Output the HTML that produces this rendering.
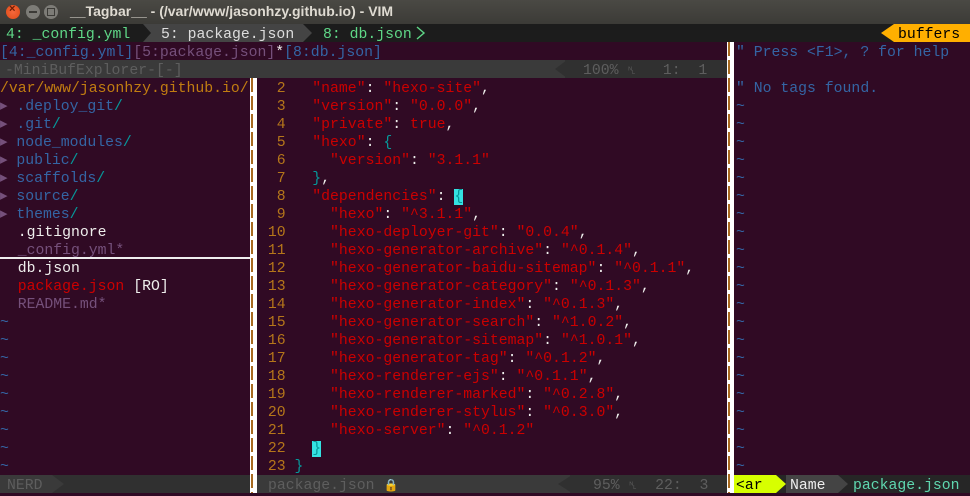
<!DOCTYPE html>
<html><head><meta charset="utf-8"><style>
*{margin:0;padding:0;box-sizing:border-box}
body{width:970px;height:493px;background:#300a24;overflow:hidden;position:relative;font-family:"Liberation Mono",monospace;font-size:14.8px;color:#eeeeec}
.r{position:absolute;height:18px;line-height:18px;white-space:pre}
.abs{position:absolute}
.dn{margin-top:2px}
.b{color:#3465a4}.t{color:#06989a}.w{color:#eeeeec}.p{color:#75507b}.s{color:#cc0000}.o{color:#c17d11}.n{color:#b5761a}.g{color:#5fd7af}.gr{color:#666}
#title{left:0;top:0;width:970px;height:24px;background:linear-gradient(#4a4944,#3c3b37)}
.btn{position:absolute;top:5px;width:14px;height:14px;border-radius:50%}
.sep{position:absolute;width:7px;background:#fff}
.sep:after{content:"";position:absolute;left:1px;top:0;bottom:0;width:2px;background:repeating-linear-gradient(#a86a20 0 14px,#fff 14px 18px)}
</style></head><body>
<div class="abs" id="title"></div>
<div class="btn" style="left:6px;background:radial-gradient(#f4683c,#df4a16);"><span style="position:absolute;left:3px;top:-2px;font:bold 11px 'Liberation Sans',sans-serif;color:#6b1d05">×</span></div>
<div class="btn" style="left:26px;background:#7d7c77;"><span style="position:absolute;left:3px;top:6px;width:8px;height:2px;background:#3c3b37"></span></div>
<div class="btn" style="left:44px;background:#7d7c77;"><span style="position:absolute;left:3px;top:3px;width:8px;height:8px;border:1.5px solid #3c3b37"></span></div>
<div class="abs" style="left:70px;top:3px;font:bold 14px 'Liberation Sans',sans-serif;color:#dfdbd2">__Tagbar__ - (/var/www/jasonhzy.github.io) - VIM</div>

<!-- tabline -->
<div class="abs" style="left:0;top:24px;width:970px;height:18px;background:#1c1c1c"></div>
<div class="abs" style="left:143px;top:24px;width:160px;height:18px;background:#444"></div>
<svg class="abs" style="left:135px;top:24px" width="190" height="18"><polygon points="0,0 8,0 16,9 8,18 0,18 8,9" fill="#1c1c1c"/><polygon points="168,0 177,9 168,18" fill="#444"/></svg>
<div class="r dn" style="left:6px;top:24px;color:#5fd787">4: _config.yml</div>
<div class="r dn" style="left:161px;top:24px;color:#ddd">5: package.json</div>
<div class="r dn" style="left:323px;top:24px;color:#5fd787">8: db.json</div>
<svg class="abs" style="left:414px;top:24px" width="14" height="18"><polyline points="3,3 10,9 3,15" fill="none" stroke="#5fd787" stroke-width="1.4"/></svg>
<svg class="abs" style="left:878px;top:24px" width="16" height="18"><polygon points="16,0 16,18 3,9" fill="#ffaf00"/></svg>
<div class="abs" style="left:894px;top:24px;width:76px;height:18px;background:#ffaf00"></div>
<div class="r dn" style="left:898px;top:24px;color:#000">buffers</div>

<!-- minibuf -->
<div class="r dn" style="left:0;top:42px"><span class="b">[4:_config.yml]</span><span class="p">[5:package.json]</span><span class="w">*</span><span class="b">[8:db.json]</span></div>
<div class="abs" style="left:0;top:60px;width:727px;height:18px;background:#3a3a3a"></div>
<div class="abs" style="left:565px;top:60px;width:162px;height:18px;background:#303030"></div>
<svg class="abs" style="left:553px;top:60px" width="14" height="18"><polygon points="14,0 14,18 2,9" fill="#303030"/></svg>
<div class="r dn" style="left:5px;top:60px;color:#5e5e5e">-MiniBufExplorer-[-]</div>
<div class="r dn" style="left:583px;top:60px;color:#5e5e5e">100% <span style="font-size:11px">␤</span>   1:  1</div>

<!-- left pane -->
<div class="abs dn" style="left:0;top:78px;white-space:pre;line-height:18px"><span class="o">/var/www/jasonhzy.github.io/</span>
<span class="p">▸ </span><span class="b">.deploy_git</span><span class="t">/</span>
<span class="p">▸ </span><span class="b">.git</span><span class="t">/</span>
<span class="p">▸ </span><span class="b">node_modules</span><span class="t">/</span>
<span class="p">▸ </span><span class="b">public</span><span class="t">/</span>
<span class="p">▸ </span><span class="b">scaffolds</span><span class="t">/</span>
<span class="p">▸ </span><span class="b">source</span><span class="t">/</span>
<span class="p">▸ </span><span class="b">themes</span><span class="t">/</span>
<span class="w">  .gitignore</span>
<span class="p">  _config.yml*</span>
<span class="w">  db.json</span>
<span class="s">  package.json </span><span class="w">[RO]</span>
<span class="p">  README.md*</span>
<span class="b">~
~
~
~
~
~
~
~
~</span></div>
<div class="abs" style="left:0;top:257px;width:250px;height:1.5px;background:#eee"></div>

<!-- separators -->
<div class="sep" style="left:250px;top:78px;height:415px"></div>
<div class="sep" style="left:727px;top:42px;height:451px"></div>

<!-- middle code -->
<div class="abs dn" style="left:259px;top:78px;white-space:pre;line-height:18px"><span class="n">  2 </span><span class="s">  "name"</span><span class="w">: </span><span class="s">"hexo-site"</span><span class="w">,</span>
<span class="n">  3 </span><span class="s">  "version"</span><span class="w">: </span><span class="s">"0.0.0"</span><span class="w">,</span>
<span class="n">  4 </span><span class="s">  "private"</span><span class="w">: </span><span class="s">true</span><span class="w">,</span>
<span class="n">  5 </span><span class="s">  "hexo"</span><span class="w">: </span><span class="t">{</span>
<span class="n">  6 </span><span class="s">    "version"</span><span class="w">: </span><span class="s">"3.1.1"</span>
<span class="n">  7 </span>  <span class="t">}</span><span class="w">,</span>
<span class="n">  8 </span><span class="s">  "dependencies"</span><span class="w">: </span><span style="background:#34e2e2;color:#06989a">{</span>
<span class="n">  9 </span><span class="s">    "hexo"</span><span class="w">: </span><span class="s">"^3.1.1"</span><span class="w">,</span>
<span class="n"> 10 </span><span class="s">    "hexo-deployer-git"</span><span class="w">: </span><span class="s">"0.0.4"</span><span class="w">,</span>
<span class="n"> 11 </span><span class="s">    "hexo-generator-archive"</span><span class="w">: </span><span class="s">"^0.1.4"</span><span class="w">,</span>
<span class="n"> 12 </span><span class="s">    "hexo-generator-baidu-sitemap"</span><span class="w">: </span><span class="s">"^0.1.1"</span><span class="w">,</span>
<span class="n"> 13 </span><span class="s">    "hexo-generator-category"</span><span class="w">: </span><span class="s">"^0.1.3"</span><span class="w">,</span>
<span class="n"> 14 </span><span class="s">    "hexo-generator-index"</span><span class="w">: </span><span class="s">"^0.1.3"</span><span class="w">,</span>
<span class="n"> 15 </span><span class="s">    "hexo-generator-search"</span><span class="w">: </span><span class="s">"^1.0.2"</span><span class="w">,</span>
<span class="n"> 16 </span><span class="s">    "hexo-generator-sitemap"</span><span class="w">: </span><span class="s">"^1.0.1"</span><span class="w">,</span>
<span class="n"> 17 </span><span class="s">    "hexo-generator-tag"</span><span class="w">: </span><span class="s">"^0.1.2"</span><span class="w">,</span>
<span class="n"> 18 </span><span class="s">    "hexo-renderer-ejs"</span><span class="w">: </span><span class="s">"^0.1.1"</span><span class="w">,</span>
<span class="n"> 19 </span><span class="s">    "hexo-renderer-marked"</span><span class="w">: </span><span class="s">"^0.2.8"</span><span class="w">,</span>
<span class="n"> 20 </span><span class="s">    "hexo-renderer-stylus"</span><span class="w">: </span><span class="s">"^0.3.0"</span><span class="w">,</span>
<span class="n"> 21 </span><span class="s">    "hexo-server"</span><span class="w">: </span><span class="s">"^0.1.2"</span>
<span class="n"> 22 </span>  <span style="background:#34e2e2;color:#06989a">}</span>
<span class="n"> 23 </span><span class="t">}</span></div>

<!-- right pane -->
<div class="r b dn" style="left:736px;top:42px">" Press &lt;F1&gt;, ? for help</div>
<div class="r b dn" style="left:736px;top:78px">" No tags found.</div>
<div class="abs b dn" style="left:736px;top:96px;white-space:pre;line-height:18px">~
~
~
~
~
~
~
~
~
~
~
~
~
~
~
~
~
~
~
~
~</div>

<!-- bottom status -->
<div class="abs" style="left:0;top:475px;width:250px;height:18px;background:#303030"></div>
<div class="abs" style="left:0;top:475px;width:52px;height:18px;background:#3a3a3a"></div>
<svg class="abs" style="left:52px;top:475px" width="14" height="18"><polygon points="0,0 0,18 12,9" fill="#3a3a3a"/></svg>
<div class="r dn" style="left:7px;top:475px;color:#5e5e5e">NERD</div>

<div class="abs" style="left:257px;top:475px;width:470px;height:18px;background:#3a3a3a"></div>
<div class="abs" style="left:570px;top:475px;width:157px;height:18px;background:#303030"></div>
<svg class="abs" style="left:556px;top:475px" width="16" height="18"><polygon points="16,0 16,18 2,9" fill="#303030"/></svg>
<div class="r dn" style="left:268px;top:475px;color:#5e5e5e">package.json <span style="font-size:12px">🔒</span></div>
<div class="r dn" style="left:593px;top:475px;color:#5e5e5e">95% <span style="font-size:11px">␤</span>  22:  3</div>

<div class="abs" style="left:734px;top:475px;width:236px;height:18px;background:#262626"></div>
<div class="abs" style="left:734px;top:475px;width:42px;height:18px;background:#d7ff00"></div>
<svg class="abs" style="left:776px;top:475px" width="12" height="18"><polygon points="0,0 0,18 10,9" fill="#d7ff00"/></svg>
<div class="abs" style="left:786px;top:475px;width:52px;height:18px;background:#444"></div>
<svg class="abs" style="left:838px;top:475px" width="12" height="18"><polygon points="0,0 0,18 10,9" fill="#444"/></svg>
<div class="r dn" style="left:736px;top:475px;color:#000">&lt;ar</div>
<div class="r dn" style="left:790px;top:475px;color:#eee">Name</div>
<div class="r g dn" style="left:853px;top:475px">package.json</div>
</body></html>
